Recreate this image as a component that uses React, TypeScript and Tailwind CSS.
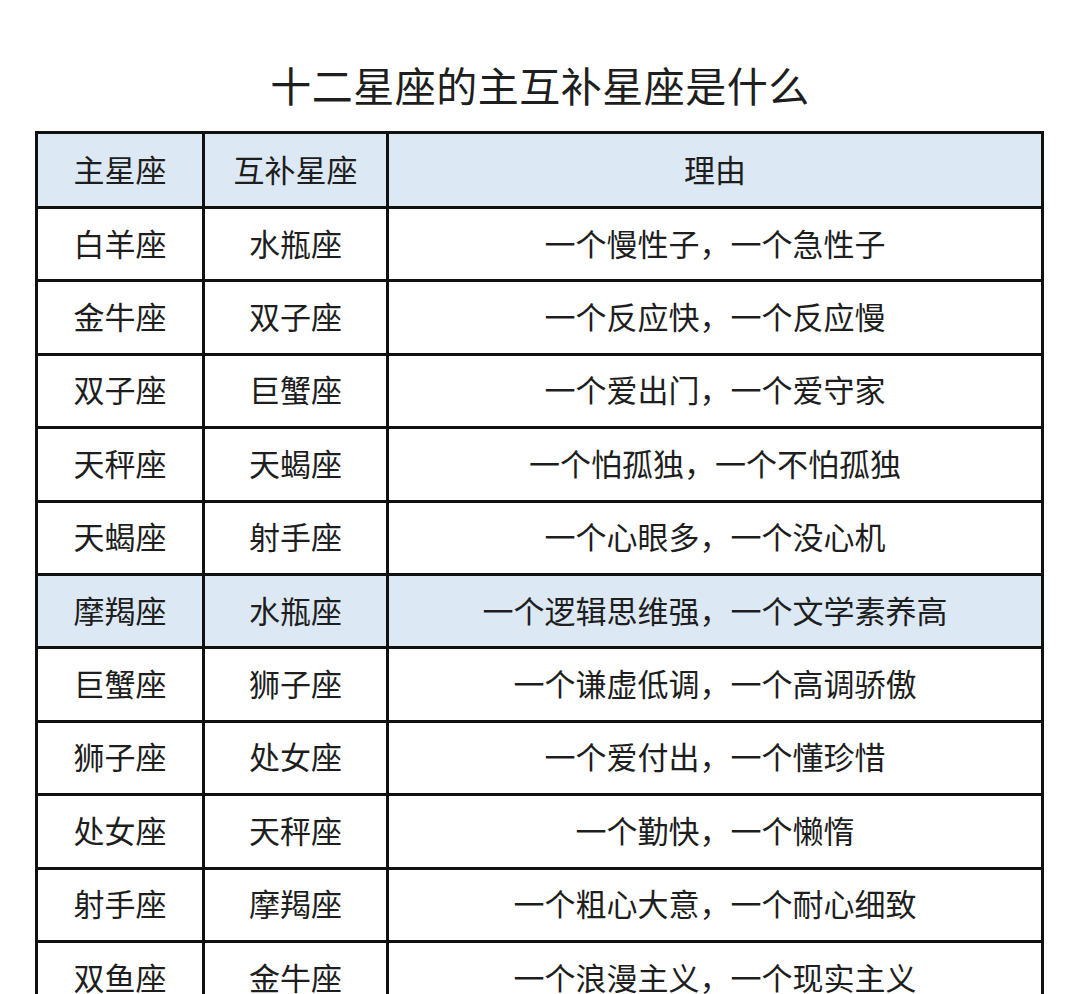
import React from "react";

const rows: [string, string, string][] = [
  ["白羊座", "水瓶座", "一个慢性子，一个急性子"],
  ["金牛座", "双子座", "一个反应快，一个反应慢"],
  ["双子座", "巨蟹座", "一个爱出门，一个爱守家"],
  ["天秤座", "天蝎座", "一个怕孤独，一个不怕孤独"],
  ["天蝎座", "射手座", "一个心眼多，一个没心机"],
  ["摩羯座", "水瓶座", "一个逻辑思维强，一个文学素养高"],
  ["巨蟹座", "狮子座", "一个谦虚低调，一个高调骄傲"],
  ["狮子座", "处女座", "一个爱付出，一个懂珍惜"],
  ["处女座", "天秤座", "一个勤快，一个懒惰"],
  ["射手座", "摩羯座", "一个粗心大意，一个耐心细致"],
  ["双鱼座", "金牛座", "一个浪漫主义，一个现实主义"],
];

export default function App() {
  return (
    <div
      className="w-[1080px] h-[994px] overflow-hidden bg-white text-[#1e1e1e]"
      style={{ fontFamily: '"Noto Sans CJK SC", "Noto Sans", sans-serif' }}
    >
      <h1 className="pt-[57px] h-[131px] text-center text-[41px] leading-[54px] font-normal tracking-[0.5px]">
        十二星座的主互补星座是什么
      </h1>
      <table className="ml-[35px] w-[1009px] border-collapse table-fixed text-[31px] leading-none">
        <colgroup>
          <col className="w-[167px]" />
          <col className="w-[184px]" />
          <col />
        </colgroup>
        <thead>
          <tr className="bg-[#dce8f4]">
            <th className="border-[3px] border-[#111] h-[75px] pb-[3px] font-normal text-center">主星座</th>
            <th className="border-[3px] border-[#111] pb-[3px] font-normal text-center">互补星座</th>
            <th className="border-[3px] border-[#111] pb-[3px] font-normal text-center">理由</th>
          </tr>
        </thead>
        <tbody>
          {rows.map((r, i) => (
            <tr key={i} className={i === 5 ? "bg-[#dce8f4]" : "bg-white"}>
              <td className="border-[3px] border-[#111] h-[73.4px] pb-[4px] text-center">{r[0]}</td>
              <td className="border-[3px] border-[#111] pb-[4px] text-center">{r[1]}</td>
              <td className="border-[3px] border-[#111] pb-[4px] text-center">{r[2]}</td>
            </tr>
          ))}
        </tbody>
      </table>
    </div>
  );
}
